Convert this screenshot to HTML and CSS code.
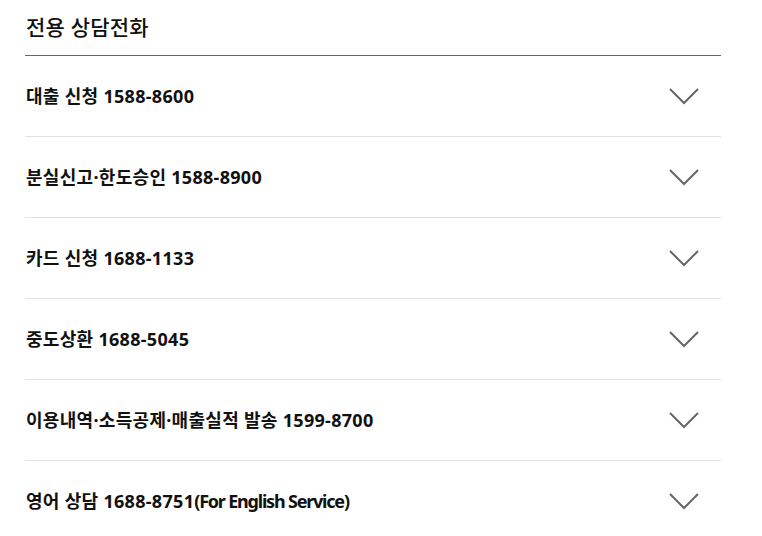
FILE: index.html
```html
<!DOCTYPE html>
<html lang="ko">
<head>
<meta charset="utf-8">
<link rel="stylesheet" href="styles.css">
</head>
<body>
<section class="panel">
  <h2 class="title">전용 상담전화</h2>
  <ul class="list">
    <li class="row"><span class="label">대출 신청 1588-8600</span><svg class="chev" viewBox="0 0 30 17"><path d="M1 1 L15 15 L29 1"/></svg></li>
    <li class="row"><span class="label">분실신고·한도승인 1588-8900</span><svg class="chev" viewBox="0 0 30 17"><path d="M1 1 L15 15 L29 1"/></svg></li>
    <li class="row"><span class="label">카드 신청 1688-1133</span><svg class="chev" viewBox="0 0 30 17"><path d="M1 1 L15 15 L29 1"/></svg></li>
    <li class="row"><span class="label">중도상환 1688-5045</span><svg class="chev" viewBox="0 0 30 17"><path d="M1 1 L15 15 L29 1"/></svg></li>
    <li class="row"><span class="label">이용내역·소득공제·매출실적 발송 1599-8700</span><svg class="chev" viewBox="0 0 30 17"><path d="M1 1 L15 15 L29 1"/></svg></li>
    <li class="row"><span class="label">영어 상담 1688-8751<span class="en">(For English Service)</span></span><svg class="chev" viewBox="0 0 30 17"><path d="M1 1 L15 15 L29 1"/></svg></li>
  </ul>
</section>
</body>
</html>
```
FILE: styles.css
```css
* { box-sizing: border-box; }
body {
  margin: 0;
  background: #fff;
  font-family: "Noto Sans", "Noto Sans CJK KR", sans-serif;
  color: #111;
}
.panel {
  width: 696px;
  margin-left: 25px;
}
.title {
  margin: 0;
  height: 56px;
  padding: 12px 0 0 1px;
  font-size: 21px;
  font-weight: 500;
  line-height: 30px;
  letter-spacing: 0.2px;
  border-bottom: 1px solid #666;
}
.list {
  list-style: none;
  margin: 0;
  padding: 0;
}
.row {
  height: 81px;
  display: flex;
  align-items: center;
  justify-content: space-between;
  padding: 0 22px 0 1px;
  border-bottom: 1px solid #e2e2e2;
}
.row:last-child { border-bottom: none; }
.label {
  font-size: 18px;
  font-weight: 700;
  line-height: 24px;
  padding-bottom: 1px;
  letter-spacing: 0.3px;
  color: #111;
}
.en {
  letter-spacing: -1.2px;
}
.chev {
  width: 30px;
  height: 17px;
  fill: none;
  stroke: #666;
  stroke-width: 2;
}
```
